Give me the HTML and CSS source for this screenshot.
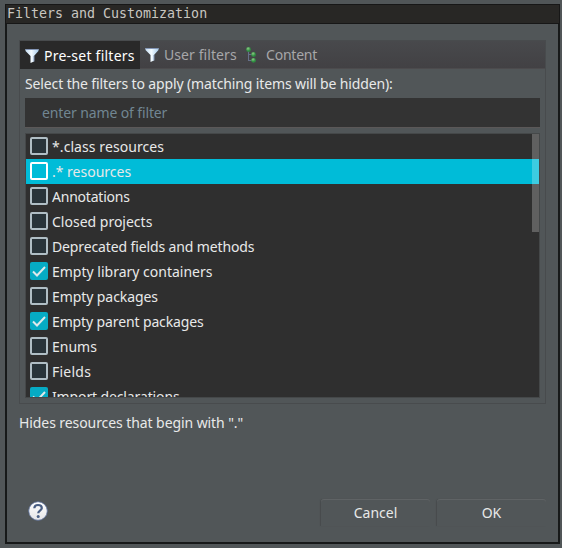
FILE: index.html
```html
<!DOCTYPE html>
<html lang="en">
<head>
<meta charset="utf-8">
<title>Filters and Customization</title>
<link rel="stylesheet" href="styles.css">
</head>
<body>
<svg class="defs" width="0" height="0" aria-hidden="true">
  <defs>
    <linearGradient id="funnel-fill" x1="0" x2="1" y1="0" y2="0"><stop offset="0" stop-color="#c4dcf2"/><stop offset=".45" stop-color="#f4fbff"/><stop offset="1" stop-color="#a9cdec"/></linearGradient>
    <radialGradient id="node-fill" cx=".4" cy=".3"><stop offset="0" stop-color="#8ccb83"/><stop offset="1" stop-color="#2d8c40"/></radialGradient>
    <linearGradient id="help-fill" x1="0" x2="0" y1="0" y2="1"><stop offset="0" stop-color="#ffffff"/><stop offset="1" stop-color="#e4e4e6"/></linearGradient>
    <symbol id="funnel" viewBox="0 0 14 16"><path d="M.5 1h13v2L9 8v5.500l-3.500 1.500V8L.5 3z" fill="url(#funnel-fill)"/><path d="M.5 1.500h13M9 8v5.500" fill="none" stroke="#8496b6" stroke-width="1"/></symbol>
    <symbol id="tree" viewBox="0 0 12 16"><path d="M2.500 3v11M2.500 7.500h5M2.500 13.500h5" fill="none" stroke="#66708a"/><circle cx="2.500" cy="2.500" r="2.400" fill="url(#node-fill)"/><circle cx="7.500" cy="7.500" r="2.400" fill="url(#node-fill)"/><circle cx="7.500" cy="13.300" r="2.400" fill="url(#node-fill)"/></symbol>
  </defs>
</svg>
<div class="window">
  <header class="titlebar">Filters and Customization</header>
  <main class="dialog">
    <section class="folder">
      <nav class="tabs">
        <div class="tab tab-active"><svg class="funnel"><use href="#funnel"/></svg><span class="wide">Pre-set filters</span></div>
        <div class="tab tab-user"><svg class="funnel"><use href="#funnel"/></svg><span class="loose">User filters</span></div>
        <div class="tab tab-content"><svg class="tree"><use href="#tree"/></svg><span class="narrow">Content</span></div>
      </nav>
      <div class="panel">
        <div class="label tight">Select the filters to apply (matching items will be hidden):</div>
        <div class="search tight">enter name of filter</div>
        <div class="list">
          <div class="row"><i class="box"></i><span class="loose">*.class resources</span></div>
          <div class="row selected"><i class="box"></i><span>.* resources</span></div>
          <div class="row"><i class="box"></i><span class="narrow">Annotations</span></div>
          <div class="row"><i class="box"></i><span>Closed projects</span></div>
          <div class="row"><i class="box"></i><span class="tight">Deprecated fields and methods</span></div>
          <div class="row"><i class="box on"><svg viewBox="0 0 18 18"><path d="M3 9.500l4 4 8-8.500"/></svg></i><span>Empty library containers</span></div>
          <div class="row"><i class="box"></i><span class="snug">Empty packages</span></div>
          <div class="row"><i class="box on"><svg viewBox="0 0 18 18"><path d="M3 9.500l4 4 8-8.500"/></svg></i><span class="tight">Empty parent packages</span></div>
          <div class="row"><i class="box"></i><span>Enums</span></div>
          <div class="row"><i class="box"></i><span class="wide">Fields</span></div>
          <div class="row"><i class="box on"><svg viewBox="0 0 18 18"><path d="M3 9.500l4 4 8-8.500"/></svg></i><span class="tight">Import declarations</span></div>
          <div class="scrollbar"></div>
        </div>
      </div>
    </section>
    <p class="description snug">Hides resources that begin with "."</p>
    <footer class="footer">
      <svg class="help" viewBox="0 0 20 20"><circle cx="10" cy="10" r="9.300" fill="url(#help-fill)" stroke="#5a6f9c" stroke-width=".8"/><path d="M6.300 7.300C6.400 5 7.900 4 10 4s3.800 1.100 3.800 3c0 2.700-3.600 2.600-3.600 5.300" fill="none" stroke="#4a5f84" stroke-width="2.200"/><circle cx="10.200" cy="15.400" r="1.500" fill="#4a5f84"/></svg>
      <div class="buttons">
        <div class="button">Cancel</div>
        <div class="button">OK</div>
      </div>
    </footer>
  </main>
</div>
</body>
</html>
```
FILE: styles.css
```css
* { box-sizing: border-box; }
body {
  margin: 0;
  width: 562px;
  height: 548px;
  padding: 4px 2px 4px 5px;
  overflow: hidden;
  background: #515658;
  color: #e8e9e9;
  font: 14px/20px "Noto Sans", sans-serif;
  white-space: nowrap;
}
.wide { letter-spacing: 0.24px; }
.loose { letter-spacing: 0.08px; }
.snug { letter-spacing: -0.08px; }
.tight { letter-spacing: -0.125px; }
.narrow { letter-spacing: -0.22px; }
.defs { display: block; }
.window { width: 555px; height: 540px; display: flex; flex-direction: column; }
.titlebar {
  height: 20px;
  padding-left: 1px;
  border: 1px solid #171717;
  background: #282725;
  color: #c8c6c1;
  font: 13.3px/17px "DejaVu Sans Mono", monospace;
}
.dialog {
  flex: 1;
  border: solid #171919;
  border-width: 0 2px 2px;
  padding: 16px 12px 0;
  background: #515658;
}
.folder { height: 364px; border: 1px solid #484b4d; }
.tabs {
  height: 28px;
  display: flex;
  background: linear-gradient(#48494c, #424144);
  border-bottom: 1px solid #4c4b4d;
  color: #a7a7a9;
}
.tab { display: flex; align-items: center; padding-top: 1px; }
.tab-active { width: 120px; height: 28px; padding-left: 5px; background: #292929; color: #fff; }
.tab-user { width: 102px; padding-left: 5px; }
.tab-content { padding-left: 4px; }
.funnel { width: 14px; height: 16px; margin-right: 5px; }
.tree { width: 12px; height: 16px; margin-right: 8px; }
.panel { padding: 5px 5px 0; }
.label { height: 24px; }
.search {
  height: 30px;
  padding: 5px 17px;
  background: #333333;
  border-bottom: 1px solid #5b5858;
  color: #718692;
}
.list {
  position: relative;
  height: 265px;
  margin-top: 5px;
  border: 1px solid #454849;
  background: #2f2f2f;
  overflow: hidden;
}
.row { height: 25px; padding-left: 4px; display: flex; align-items: center; gap: 4px; }
.selected { background: #00bcd8; }
.box {
  width: 18px;
  height: 18px;
  flex: none;
  margin-top: -1px;
  border: 2px solid #b0bec5;
  border-radius: 2px;
  background: #29343a;
}
.selected .box { background: #00bcd8; border-color: #fff; }
.box.on { border: 0; background: #06abc4; }
.box svg { display: block; width: 18px; height: 18px; fill: none; stroke: #dfe9eb; stroke-width: 2; }
.scrollbar { position: absolute; top: 0; right: 0; width: 7px; height: 98px; background: #ffffff3d; }
.description { margin: 9px 0 0; height: 20px; }
.footer { display: flex; justify-content: space-between; margin-top: 66px; }
.help { width: 20px; height: 20px; margin: 2px 0 0 9px; }
.buttons { display: flex; gap: 7px; }
.button {
  width: 109px;
  height: 27px;
  line-height: 28px;
  text-align: center;
  border-radius: 3px 3px 0 0;
  box-shadow: inset 0 1px #5f6365, -1px 0 1px #474b4d;
}
```
